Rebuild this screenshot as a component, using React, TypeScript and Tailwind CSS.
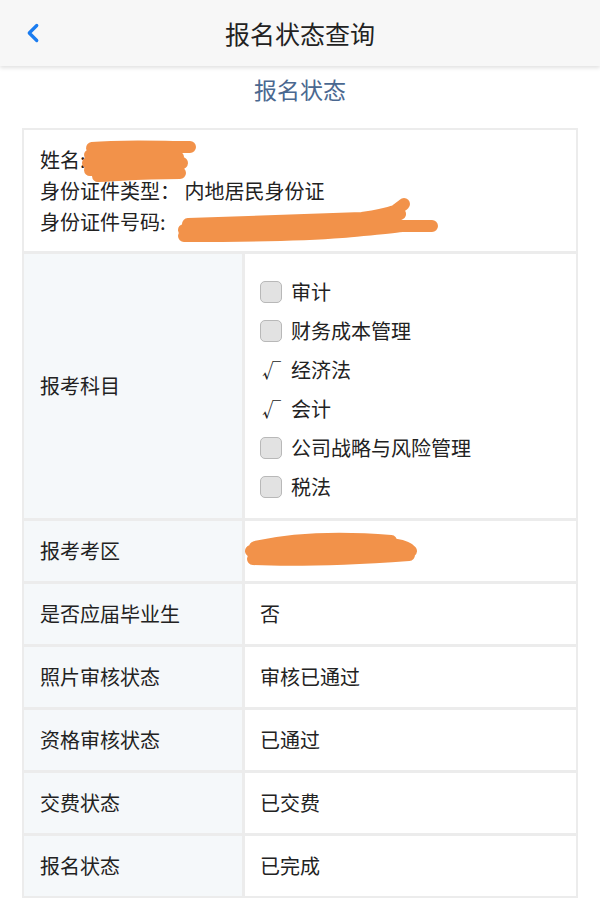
import { ChevronLeft } from 'lucide-react';

const subjects = [
  { name: '审计', checked: false },
  { name: '财务成本管理', checked: false },
  { name: '经济法', checked: true },
  { name: '会计', checked: true },
  { name: '公司战略与风险管理', checked: false },
  { name: '税法', checked: false },
];

const rows = [
  { label: '是否应届毕业生', value: '否' },
  { label: '照片审核状态', value: '审核已通过' },
  { label: '资格审核状态', value: '已通过' },
  { label: '交费状态', value: '已交费' },
  { label: '报名状态', value: '已完成' },
];

// redaction marks drawn over the personal data
function Scribble({ d, w, h, className }: { d: string; w: number; h: number; className: string }) {
  return (
    <svg className={className} width={w} height={h} viewBox={`0 0 ${w} ${h}`}>
      <path d={d} fill="none" stroke="#f2924a" strokeWidth="12" strokeLinecap="round" strokeLinejoin="round" />
    </svg>
  );
}

export default function App() {
  return (
    <div
      className="w-[600px] min-h-[912px] bg-white text-[#222]"
      style={{ fontFamily: '"Noto Sans CJK SC", "Noto Sans", sans-serif' }}
    >
      {/* Header */}
      <div className="relative h-[66px] bg-[#f7f7f7] shadow-[0_2px_4px_rgba(0,0,0,0.12)] flex items-center justify-center">
        <ChevronLeft className="absolute left-[18px] top-[18px] h-[30px] w-[30px] text-[#1a7cf0]" strokeWidth={2.6} />
        <span className="text-[25px] leading-none">报名状态查询</span>
      </div>

      <div className="pt-[8px] pb-[24px] text-center text-[23px] leading-[30px] text-[#4a6890]">报名状态</div>

      {/* Table */}
      <div className="mx-[22px] bg-[#ececec] p-[2px] flex flex-col gap-[3px]">
        {/* Personal info */}
        <div className="relative bg-white px-[16px] py-[14px] text-[20px] leading-[31px]">
          <div>姓名:</div>
          <div>身份证件类型：&nbsp;内地居民身份证</div>
          <div>身份证件号码:</div>
          <Scribble
            className="absolute left-[38px] top-[9px]"
            w={135}
            h={46}
            d="M30 9 C60 6 100 8 128 8 M28 16 C30 20 40 20 116 18 M26 24 C50 24 80 22 120 24 M28 31 C50 30 70 32 116 30 M36 37 C60 36 80 34 118 34"
          />
          <Scribble
            className="absolute left-[148px] top-[66px]"
            w={285}
            h={50}
            d="M12 34 C60 30 120 30 180 26 C200 24 215 20 222 16 C226 12 230 10 232 8 M12 40 C60 40 120 40 170 36 C190 34 215 32 230 30 C240 30 250 30 260 30 M16 28 C70 26 130 24 190 22 C205 20 215 18 226 14 M200 30 C210 28 220 22 228 18"
          />
        </div>

        {/* Subjects */}
        <div className="flex gap-[3px]">
          <div className="w-[218px] shrink-0 bg-[#f5f8fa] px-[16px] flex items-center text-[20px]">报考科目</div>
          <div className="flex-1 bg-white pl-[15px] pt-[18px] pb-[12px] flex flex-col">
            {subjects.map((s) => (
              <div key={s.name} className="h-[39px] flex items-center text-[20px]">
                {s.checked ? (
                  <span className="w-[22px] pl-[2px] text-[19px] leading-none">√</span>
                ) : (
                  <span className="w-[22px] h-[22px] rounded-[5px] border border-[#b8b8b8] bg-[#e2e2e2]" />
                )}
                <span className="ml-[9px]">{s.name}</span>
              </div>
            ))}
          </div>
        </div>

        {/* Exam region */}
        <div className="flex gap-[3px] h-[60px]">
          <div className="w-[218px] shrink-0 bg-[#f5f8fa] px-[16px] flex items-center text-[20px]">报考考区</div>
          <div className="relative flex-1 bg-white">
            <Scribble
              className="absolute left-[-4px] top-[4px]"
              w={185}
              h={50}
              d="M10 26 C40 20 80 16 120 18 C150 18 165 20 170 26 M12 34 C50 36 110 34 168 30 M14 22 C50 14 100 12 150 16 M20 30 L160 26"
            />
          </div>
        </div>

        {rows.map((r) => (
          <div key={r.label} className="flex gap-[3px] h-[60px]">
            <div className="w-[218px] shrink-0 bg-[#f5f8fa] px-[16px] flex items-center text-[20px]">{r.label}</div>
            <div className="flex-1 bg-white px-[15px] flex items-center text-[20px]">{r.value}</div>
          </div>
        ))}
      </div>
    </div>
  );
}
